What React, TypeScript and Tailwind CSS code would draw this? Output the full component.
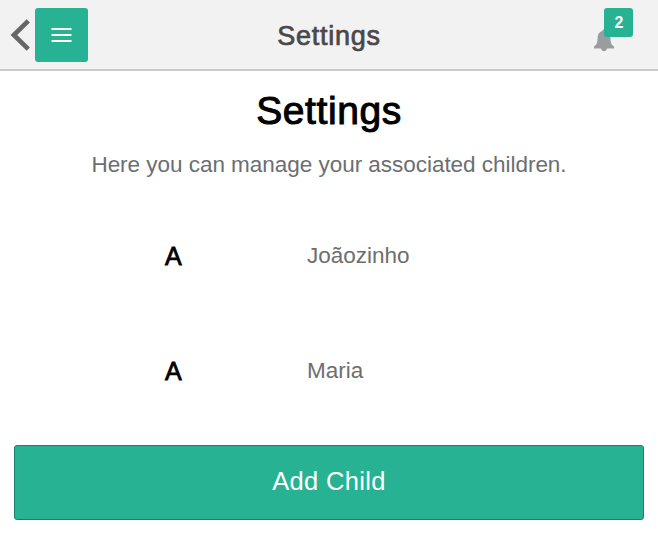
const children = [
  { initial: 'A', name: 'Joãozinho' },
  { initial: 'A', name: 'Maria' },
];

function Header() {
  return (
    <header className="flex h-[71px] items-start border-b-2 border-[#cbcbcb] bg-[#f2f2f2]">
      <div className="flex w-[200px] items-start pt-2">
        <svg className="mt-[10px] ml-[10px] h-[34px] w-[21px] shrink-0" viewBox="0 0 21 34" fill="none" stroke="#666" strokeWidth="4.6">
          <path d="M18.300 2.800L3.800 17l14.500 14.200" />
        </svg>
        <button className="ml-1 flex h-[54px] w-[53px] items-center justify-center rounded-[3px] bg-[#28b294] pr-px pb-px">
          <svg className="h-4 w-[21px]" viewBox="0 0 21 16" stroke="#fff" strokeWidth="2">
            <path d="M.5 2h20M.5 8h20M.5 14h20" />
          </svg>
        </button>
      </div>
      <div className="flex-1 pt-[21px] text-center text-[27px] leading-[30px] tracking-[0.75px] text-[#484848] [-webkit-text-stroke:0.7px_#484848]">
        Settings
      </div>
      <div className="flex w-[200px] justify-end pt-2 pr-[25px]">
        <div className="relative h-[46px] w-10">
          <svg className="absolute top-[20px] left-0 h-6 w-[22px]" viewBox="0 0 22 24" fill="#999d9f">
            <path d="M11 1.5c1.1 0 1.7.7 1.8 1.6 3.2.9 4.5 3.4 4.6 7 .2 4.500.700 6.800 3.600 8.500v1.800H14c-.4 1.800-1.400 2.800-3 2.800s-2.600-1-3-2.800H1v-1.800c2.900-1.700 3.400-4 3.600-8.500.1-3.600 1.400-6.100 4.600-7 .1-.9.7-1.600 1.800-1.600z" />
          </svg>
          <span className="absolute top-0 right-0 flex h-[29px] w-[29px] items-center justify-center rounded-[3px] bg-[#28b294] pt-px pl-px text-[16px] leading-none font-bold text-white">
            2
          </span>
        </div>
      </div>
    </header>
  );
}

export default function App() {
  return (
    <div className="h-[534px] w-[658px] overflow-hidden bg-white font-['Liberation_Sans',Arial,sans-serif]">
      <Header />
      <main className="px-[14px]">
        <h1 className="pt-[18px] text-center text-[39px] leading-[44px] tracking-[0.6px] text-black [-webkit-text-stroke:1px_#000]">
          Settings
        </h1>
        <p className="mt-[19px] text-center text-[22.5px] leading-[26px] tracking-[-0.03px] text-[#6b6f71]">
          Here you can manage your associated children.
        </p>
        <ul className="mt-5">
          {children.map((child) => (
            <li key={child.name} className="flex h-[115px] items-center">
              <span className="w-[293px] pl-[151px] text-[25px] leading-[30px] text-black [-webkit-text-stroke:0.8px_#000]">
                {child.initial}
              </span>
              <span className="text-[22.5px] leading-[30px] text-[#6e6e6e]">{child.name}</span>
            </li>
          ))}
        </ul>
        <button className="mt-[17px] h-[75px] w-full rounded-[3px] border border-[#1c8069] bg-[#28b294] pb-0.5 text-[25.5px] tracking-[0.35px] text-white">
          Add Child
        </button>
      </main>
    </div>
  );
}
